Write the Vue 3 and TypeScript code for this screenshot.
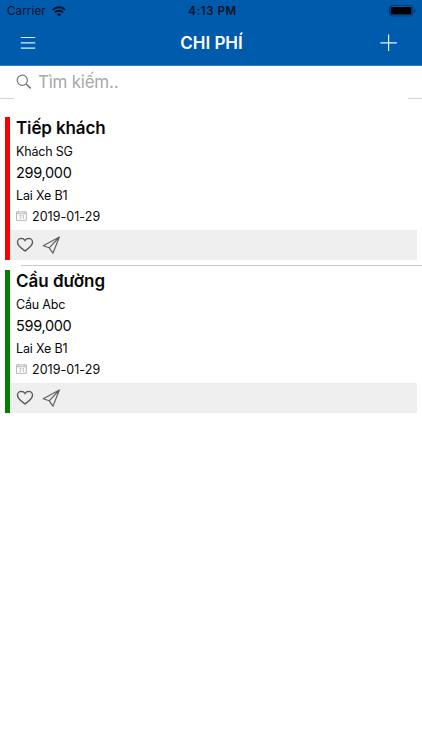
<script setup lang="ts">
interface Expense {
  title: string
  note: string
  amount: string
  driver: string
  date: string
  status: 'pending' | 'approved'
}

const expenses: Expense[] = [
  { title: 'Tiếp khách', note: 'Khách SG', amount: '299,000', driver: 'Lai Xe B1', date: '2019-01-29', status: 'pending' },
  { title: 'Cầu đường', note: 'Cầu Abc', amount: '599,000', driver: 'Lai Xe B1', date: '2019-01-29', status: 'approved' },
]
</script>

<template>
  <div class="screen">
    <header class="header">
      <div class="status">
        <div class="carrier">
          <span>Carrier</span>
          <svg width="14" height="11" viewBox="0 0 14 11">
            <path d="M0.8 3.9a8.8 8.8 0 0 1 12.4 0M3 6.3a5.7 5.7 0 0 1 8 0" fill="none" stroke="#001326" stroke-width="2" />
            <path d="M4.9 8.3a3 3 0 0 1 4.2 0L7 10.6z" fill="#001326" />
          </svg>
        </div>
        <span class="time">4:13 PM</span>
        <svg class="battery" width="27" height="12" viewBox="0 0 27 12">
          <rect x="0.5" y="0.5" width="23.3" height="10.5" rx="2.5" fill="none" stroke="#003b76" />
          <rect x="1.8" y="1.9" width="20.6" height="7.6" rx="1" fill="#000" />
          <path d="M25 4v4q1.6-.5 1.6-2T25 4z" fill="#003b76" />
        </svg>
      </div>
      <nav class="nav">
        <svg width="16" height="14" viewBox="0 0 16 14">
          <path d="M.8 1.5h14.4M.8 6.8h14.4M.8 12.1h14.4" stroke="#d5f3ff" stroke-width="1.2" />
        </svg>
        <h1>CHI PHÍ</h1>
        <svg class="add" width="18" height="18" viewBox="0 0 18 18">
          <path d="M.4 8.8h16.4M8.6.6V17" stroke="#e3f5ff" stroke-width="1.2" />
        </svg>
      </nav>
    </header>

    <div class="search">
      <i class="edge"></i>
      <div class="field">
        <svg width="16" height="16" viewBox="0 0 16 16" fill="none" stroke="#777">
          <circle cx="6.3" cy="6.3" r="5.1" stroke-width="1.2" />
          <path d="M10 10l4.7 4.4" stroke-width="1.7" />
        </svg>
        <span>Tìm kiếm..</span>
      </div>
      <i class="edge"></i>
    </div>

    <main class="list">
      <article v-for="item in expenses" :key="item.title" class="card" :class="item.status">
        <h2>{{ item.title }}</h2>
        <p class="note">{{ item.note }}</p>
        <p class="amount">{{ item.amount }}</p>
        <p class="driver">{{ item.driver }}</p>
        <div class="date">
          <svg width="11" height="10" viewBox="0 0 11 10" fill="none" stroke="#a6a6a6" stroke-width=".8">
            <path d="M.5.9h9.8v8.5H.5zM.5 2.7h9.8M2.5 0v1.5M8.3 0v1.5" />
            <path d="M3.2 4.3h1.9L4 5.6q1.2 0 1.1 1.1-.2 1.1-1.9.8M6.4 4.8l1-.6v3.7" stroke-width=".7" />
          </svg>
          <span>{{ item.date }}</span>
        </div>
        <div class="actions">
          <svg width="18" height="16" viewBox="0 0 18 16">
            <path d="M9 14C6.8 12.2 1.5 9.2 1.5 5.2A3.8 3.8 0 0 1 5.2 1.4C7 1.4 8.3 2.3 9 3.5 9.7 2.3 11 1.4 12.8 1.4A3.8 3.8 0 0 1 16.5 5.2C16.5 9.2 11.2 12.2 9 14z" fill="none" stroke="#5a5a5a" stroke-width="1.4" />
          </svg>
          <svg width="19" height="19" viewBox="0 0 19 19">
            <path d="M17.4 1L1.2 9.8l6 2 3.7 5.4zM17.4 1L7.2 11.8" fill="none" stroke="#606060" stroke-width="1.2" stroke-linejoin="round" />
          </svg>
        </div>
      </article>
    </main>
  </div>
</template>

<style>
body { background: #fff; }
</style>

<style scoped>
.screen {
  height: 750px;
  overflow: hidden;
  background: #fff;
  color: #080808;
  font-family: Inter, "Noto Sans", sans-serif;
}
.header {
  height: 66px;
  box-sizing: border-box;
  background: #005bac;
  border-bottom: 1px solid #3b7fc0;
}
.status {
  display: grid;
  grid-template-columns: 1fr auto 1fr;
  align-items: center;
  height: 22px;
  padding: 0 6px 0 9px;
  color: #001326;
  font-size: 11.5px;
}
.carrier { display: flex; align-items: center; gap: 6px; margin-left: -2px; letter-spacing: .16px; }
.time { font-weight: 600; letter-spacing: .55px; }
.battery { justify-self: end; }
.nav {
  display: grid;
  grid-template-columns: 1fr auto 1fr;
  align-items: center;
  height: 42px;
  padding: 0 24px 0 20px;
}
.add { justify-self: end; }
h1, h2, p { margin: 0; }
h1 { margin: 0 -4px 0 1px; color: #fff; font-size: 17px; font-weight: 600; letter-spacing: -.02px; }
.search { display: flex; align-items: flex-end; height: 33px; }
.edge { width: 14px; height: 1px; background: #d2d2d2; }
.field {
  display: flex;
  flex: 1;
  align-items: center;
  gap: 6px;
  height: 33px;
  padding: 0 2px 2px;
  box-sizing: border-box;
  color: #a9a9a9;
  font-size: 17px;
  letter-spacing: -.25px;
}
.list { padding-top: 18px; }
.card {
  display: flex;
  flex-direction: column;
  height: 143px;
  margin: 0 5.5px 0 5px;
  box-sizing: border-box;
  border-left: 5px solid #fa0000;
}
.card.approved { border-left-color: #008000; }
.card.pending::after {
  content: "";
  flex: none;
  height: 1px;
  margin: 5px -6px 0 11px;
  background: #c8c8c8;
}
.card.pending { margin-bottom: 10.4px; }
h2, p, .date { padding-left: 6px; white-space: nowrap; }
h2 { height: 23px; flex: none; font-size: 17px; line-height: 22px; font-weight: 600; letter-spacing: -.12px; }
.approved h2 { letter-spacing: 0; }
.note { height: 22px; flex: none; font-size: 12.5px; line-height: 23px; letter-spacing: -.2px; }
.amount { height: 22px; flex: none; font-size: 14.5px; line-height: 22.8px; letter-spacing: -.32px; }
.driver { height: 22px; flex: none; font-size: 12.5px; line-height: 23px; letter-spacing: -.15px; }
.date { display: flex; align-items: center; gap: 5px; height: 20px; flex: none; font-size: 12.5px; letter-spacing: .04px; }
.actions {
  display: flex;
  flex: none;
  align-items: center;
  gap: 8px;
  height: 30px;
  margin-top: 4px;
  padding-left: 6px;
  background: #efefef;
}
</style>
